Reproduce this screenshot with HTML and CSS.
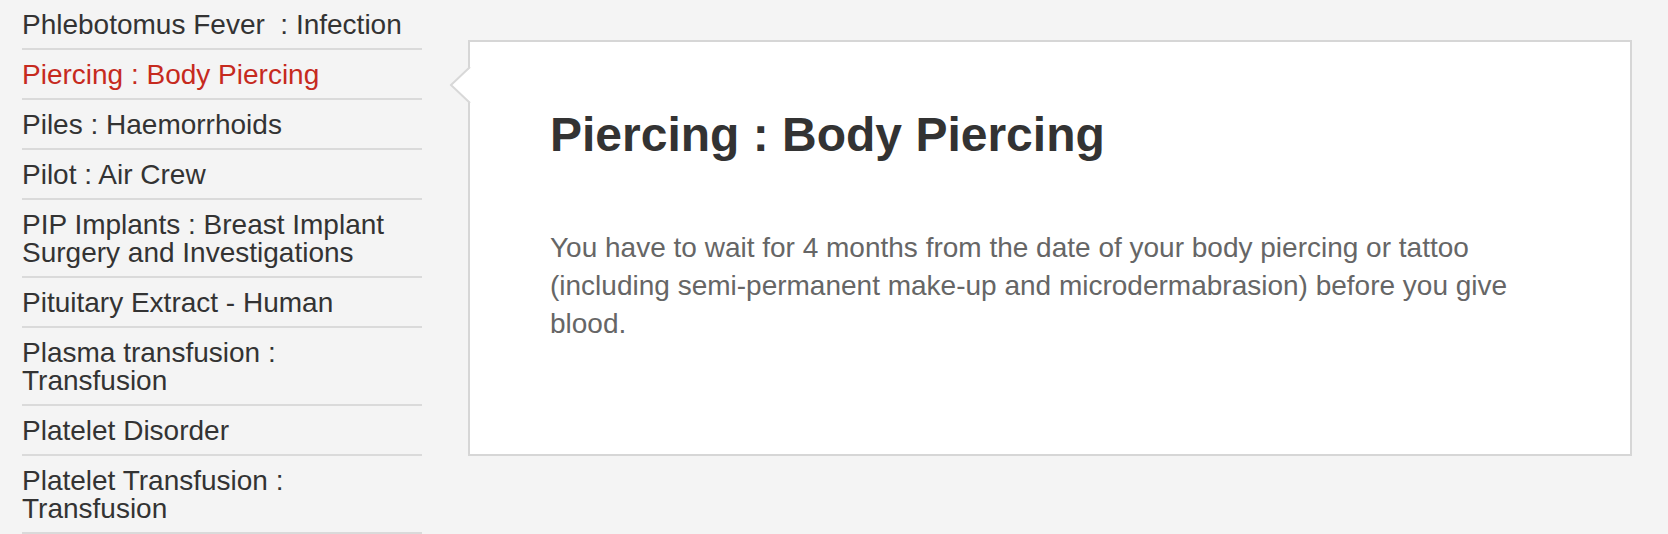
FILE: index.html
```html
<!DOCTYPE html>
<html lang="en">
<head>
<meta charset="utf-8">
<title>Piercing : Body Piercing</title>
<link rel="stylesheet" href="styles.css">
</head>
<body>
<div class="page">
  <ul class="topics">
    <li class="topic">Phlebotomus Fever&nbsp; : Infection</li>
    <li class="topic active">Piercing : Body Piercing</li>
    <li class="topic">Piles : Haemorrhoids</li>
    <li class="topic">Pilot : Air Crew</li>
    <li class="topic">PIP Implants : Breast Implant Surgery and Investigations</li>
    <li class="topic">Pituitary Extract - Human</li>
    <li class="topic">Plasma transfusion : Transfusion</li>
    <li class="topic">Platelet Disorder</li>
    <li class="topic">Platelet Transfusion : Transfusion</li>
  </ul>
  <section class="detail">
    <svg class="pointer" width="22" height="36" viewBox="0 0 22 36" aria-hidden="true">
      <path d="M22 0 L2 18 L22 36 Z" fill="#ffffff"/>
      <path d="M21 0 L2 18 L21 36" fill="none" stroke="#d8d8d8" stroke-width="2"/>
    </svg>
    <h1 class="detail-title">Piercing : Body Piercing</h1>
    <p class="detail-text">You have to wait for 4 months from the date of your body piercing or tattoo (including semi-permanent make-up and microdermabrasion) before you give blood.</p>
  </section>
</div>
</body>
</html>
```
FILE: styles.css
```css
html, body {
  margin: 0;
  height: 100%;
  overflow: hidden;
  background: #f4f4f4;
}

body {
  font-family: "Liberation Sans", Arial, Helvetica, sans-serif;
  color: #333333;
}

.page {
  display: flex;
  align-items: flex-start;
  padding-left: 22px;
}

.topics {
  list-style: none;
  margin: 0;
  padding: 0;
  width: 400px;
  flex: none;
}

.topic {
  font-size: 28px;
  line-height: 28px;
  padding: 11px 0 9px;
  border-bottom: 2px solid #dadada;
  color: #333333;
}

.topic.active {
  color: #c62a1e;
}

.detail {
  position: relative;
  flex: none;
  box-sizing: border-box;
  width: 1164px;
  margin: 40px 0 0 46px;
  padding: 65px 80px 111px;
  background: #ffffff;
  border: 2px solid #d6d6d6;
}

.pointer {
  position: absolute;
  left: -21px;
  top: 25px;
  display: block;
}

.detail-title {
  margin: 0;
  font-size: 48px;
  line-height: 56px;
  font-weight: bold;
  color: #333333;
}

.detail-text {
  margin: 66px 0 0;
  font-size: 28px;
  line-height: 38px;
  color: #666666;
}
```
